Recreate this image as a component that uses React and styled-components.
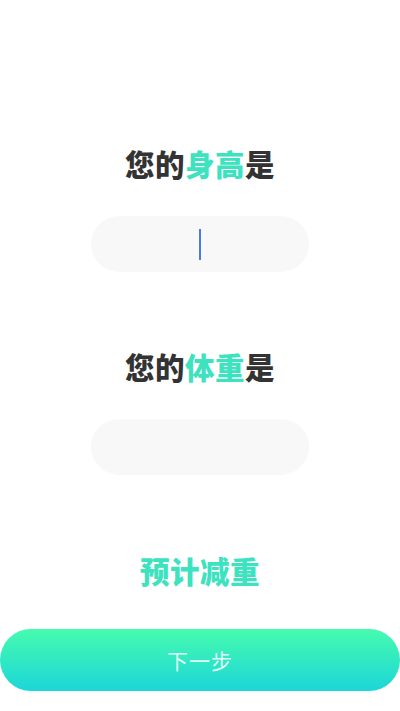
import React from "react";
import styled, { createGlobalStyle } from "styled-components";

const GlobalStyle = createGlobalStyle`
  html, body {
    margin: 0;
    padding: 0;
    background: #ffffff;
  }
  body {
    font-family: "Noto Sans CJK SC", "Noto Sans", sans-serif;
  }
`;

const Page = styled.div`
  width: 400px;
  height: 711px;
  display: flex;
  flex-direction: column;
  align-items: center;
  padding-top: 143px;
  box-sizing: border-box;
  background: #fff;
`;

const Title = styled.div`
  height: 40px;
  line-height: 40px;
  font-size: 29.5px;
  font-weight: 900;
  color: #333333;
  letter-spacing: 0.5px;
  margin-top: ${(p) => p.$top || 0}px;

  span {
    color: #3de2bf;
  }
`;

const Field = styled.div`
  width: 218px;
  height: 56px;
  border-radius: 28px;
  background: #f8f8f8;
  margin-top: 33px;
  display: flex;
  align-items: center;
  justify-content: center;
`;

const Caret = styled.div`
  width: 2px;
  height: 31px;
  margin-left: -1px;
  background: #4a7be0;
`;

const Estimate = styled.div`
  margin-top: 75px;
  height: 40px;
  line-height: 40px;
  font-size: 29.5px;
  font-weight: 900;
  color: #3de2bf;
  letter-spacing: 0.5px;
`;

const NextButton = styled.button`
  margin-top: 39px;
  width: 400px;
  height: 62px;
  border: none;
  border-radius: 31px;
  background: linear-gradient(180deg, #46fbae 0%, #1cd6d8 100%);
  color: rgba(255, 255, 255, 0.88);
  font-family: "Noto Sans CJK SC", "Noto Sans", sans-serif;
  font-size: 21px;
  font-weight: 400;
  letter-spacing: 1px;
  padding: 0;
`;

export default function App() {
  return (
    <>
      <GlobalStyle />
      <Page>
        <Title>
          您的<span>身高</span>是
        </Title>
        <Field>
          <Caret />
        </Field>
        <Title $top={74}>
          您的<span>体重</span>是
        </Title>
        <Field />
        <Estimate>预计减重</Estimate>
        <NextButton>下一步</NextButton>
      </Page>
    </>
  );
}
